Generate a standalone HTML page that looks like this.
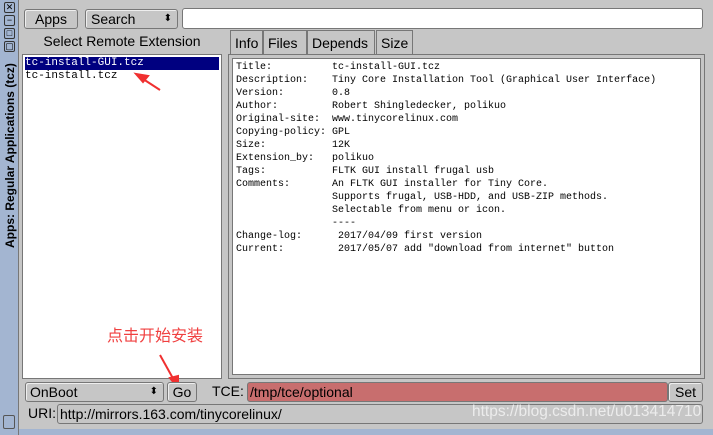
<!DOCTYPE html>
<html><head><style>
*{box-sizing:border-box;margin:0;padding:0}
body{width:713px;height:435px;background:#c6c6c6;position:relative;overflow:hidden;font-family:"Liberation Sans",sans-serif;font-size:14px;color:#000}
.a{position:absolute}
.btn{position:absolute;border:1px solid #777;border-radius:3px;background:#c6c6c6;box-shadow:inset 1px 1px #eee;text-align:center;font-size:14px;line-height:18px}
.field{position:absolute;background:#fff;border:1px solid #777;border-radius:3px}
.mono{font-family:"Liberation Mono",monospace;font-size:10px;line-height:13px;white-space:pre}
.tab{position:absolute;top:30px;height:25px;border:1px solid #777;border-bottom:none;background:#c6c6c6;font-size:14px;line-height:24px;padding-left:4px}
.wb{position:absolute;left:4px;width:11px;height:11px;border:1px solid #333;border-radius:2px;font-size:9px;line-height:9px;text-align:center}
</style></head><body>
<div class="a" style="left:0;top:0;width:19px;height:435px;background:#a3b5d1;border-right:1px solid #777"></div>
<div class="wb" style="top:2px">✕</div>
<div class="wb" style="top:15px">−</div>
<div class="wb" style="top:28px">□</div>
<div class="wb" style="top:41px">▢</div>
<div class="a" style="left:3px;top:248px;transform:rotate(-90deg);transform-origin:0 0;font-weight:bold;font-size:12px;white-space:nowrap">Apps: Regular Applications (tcz)</div>
<div class="a" style="left:3px;top:415px;width:12px;height:14px;border:1px solid #555;border-radius:2px"></div>
<div class="a" style="left:19px;top:429px;width:694px;height:6px;background:#a3b5d1"></div>

<div class="btn" style="left:24px;top:9px;width:54px;height:20px">Apps</div>
<div class="btn" style="left:85px;top:9px;width:93px;height:20px;text-align:left;padding-left:5px">Search<span class="a" style="right:5px;top:0;font-size:10px">⬍</span></div>
<div class="field" style="left:182px;top:8px;width:521px;height:21px"></div>
<div class="a" style="left:22px;top:33px;width:200px;text-align:center;font-size:14px">Select Remote Extension</div>
<div class="field" style="left:22px;top:54px;width:200px;height:325px;border-radius:0"></div>
<div class="a mono" style="left:25px;top:57px;width:194px;height:13px;background:#000080;color:#fff;outline:1px dotted #fff;font-size:11px">tc-install-GUI.tcz</div>
<div class="a mono" style="left:25px;top:70px;font-size:11px">tc-install.tcz</div>

<div class="tab" style="left:230px;width:33px">Info</div>
<div class="tab" style="left:263px;width:44px">Files</div>
<div class="tab" style="left:307px;width:68px">Depends</div>
<div class="tab" style="left:376px;width:37px">Size</div>
<div class="a" style="left:228px;top:54px;width:477px;height:325px;border:1px solid #777"></div>
<div class="a" style="left:232px;top:58px;width:469px;height:317px;background:#fff;border:1px solid #777"></div>
<div class="a mono" style="left:236px;top:61px">Title:          tc-install-GUI.tcz
Description:    Tiny Core Installation Tool (Graphical User Interface)
Version:        0.8
Author:         Robert Shingledecker, polikuo
Original-site:  www.tinycorelinux.com
Copying-policy: GPL
Size:           12K
Extension_by:   polikuo
Tags:           FLTK GUI install frugal usb
Comments:       An FLTK GUI installer for Tiny Core.
                Supports frugal, USB-HDD, and USB-ZIP methods.
                Selectable from menu or icon.
                ----
Change-log:      2017/04/09 first version
Current:         2017/05/07 add "download from internet" button</div>

<div class="a" style="left:107px;top:322px;color:#f04040;font-size:16px;font-family:'Noto Sans CJK SC',sans-serif">点击开始安装</div>
<svg class="a" style="left:0;top:0" width="713" height="435"><g stroke="#f03030" stroke-width="2" fill="#f03030"><line x1="160" y1="90" x2="140" y2="77"/><polygon points="136,74 148,76 143,82"/><line x1="160" y1="355" x2="175" y2="382"/><polygon points="178,388 170,378 178,376"/></g></svg>

<div class="btn" style="left:25px;top:382px;width:139px;height:20px;text-align:left;padding-left:4px">OnBoot<span class="a" style="right:5px;top:0;font-size:10px">⬍</span></div>
<div class="btn" style="left:167px;top:382px;width:30px;height:20px">Go</div>
<div class="a" style="left:212px;top:383px">TCE:</div>
<div class="a" style="left:247px;top:382px;width:421px;height:20px;background:#c86e6e;border:1px solid #777;border-radius:3px;padding-left:2px;line-height:18px">/tmp/tce/optional</div>
<div class="btn" style="left:668px;top:382px;width:35px;height:20px">Set</div>
<div class="a" style="left:28px;top:405px">URI:</div>
<div class="a" style="left:57px;top:404px;width:646px;height:20px;border:1px solid #777;border-radius:3px;padding-left:2px;line-height:18px">http://mirrors.163.com/tinycorelinux/</div>
<div class="a" style="left:472px;top:403px;color:#ececec;font-size:15.5px">https://blog.csdn.net/u013414710</div>
</body></html>
